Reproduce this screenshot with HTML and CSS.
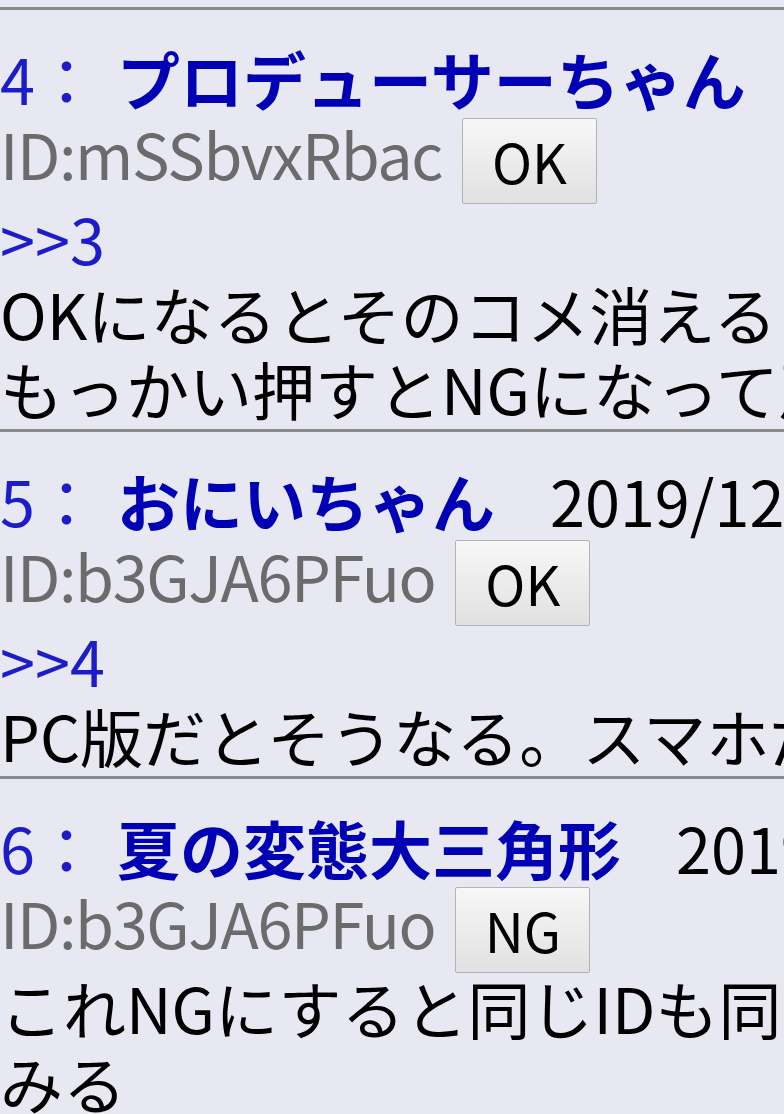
FILE: index.html
```html
<!DOCTYPE html>
<html lang="ja">
<head>
<meta charset="utf-8">
<title>スレッド</title>
<link rel="stylesheet" href="styles.css">
</head>
<body>
<div class="thread">
    <div class="post">
        <div class="head"><span class="num">4</span><span class="colon">：</span><b class="name">プロデューサーちゃん</b><span class="date">2019/12/10(火) 21:14:35</span></div>
        <div class="id-row"><span class="id">ID:mSSbvxRbac</span><button class="ng-btn">OK</button></div>
        <div class="msg"><a class="anchor" href="javascript:;">&gt;&gt;3</a><br>OKになるとそのコメ消えるよ<br>もっかい押すとNGになって戻る</div>
    </div>
    <div class="post">
        <div class="head"><span class="num">5</span><span class="colon">：</span><b class="name">おにいちゃん</b><span class="date">2019/12/10(火) 21:16:02</span></div>
        <div class="id-row"><span class="id">ID:b3GJA6PFuo</span><button class="ng-btn">OK</button></div>
        <div class="msg"><a class="anchor" href="javascript:;">&gt;&gt;4</a><br>PC版だとそうなる。スマホだと違うのかな</div>
    </div>
    <div class="post">
        <div class="head"><span class="num">6</span><span class="colon">：</span><b class="name">夏の変態大三角形</b><span class="date">2019/12/10(火) 21:18:47</span></div>
        <div class="id-row"><span class="id">ID:b3GJA6PFuo</span><button class="ng-btn">NG</button></div>
        <div class="msg">これNGにすると同じIDも同時に消えるか試して<br>みる</div>
    </div>
</div>
</body>
</html>
```

FILE: styles.css
```css
html,body{margin:0;padding:0;}
body{background:#e8e8f2;color:#000;font:63px/75px "Noto Sans CJK JP","Noto Sans",sans-serif;overflow:hidden;}
.thread{width:1600px;padding-top:7px;white-space:nowrap;}
.post{border-top:3px solid #8a8a8a;padding:30px 0 4px;}
.head{height:75px;}
.num,.colon{color:#1c1cc8;}
.name{color:#0000b4;font-weight:bold;margin-left:19px;}
.date{margin-left:55px;}
.id-row{display:flex;align-items:flex-start;height:85px;}
.id{color:#6b6b6b;letter-spacing:-1.4px;}
.ng-btn{margin:3px 0 0 20px;width:135px;height:86px;padding:0;border:1px solid #b3b3b3;border-radius:2px;background:linear-gradient(#f7f7f7,#e1e1e1);color:#000;font:54px/1 "Noto Sans CJK JP","Noto Sans",sans-serif;}
.anchor{color:#1c1cc8;text-decoration:none;}
```
